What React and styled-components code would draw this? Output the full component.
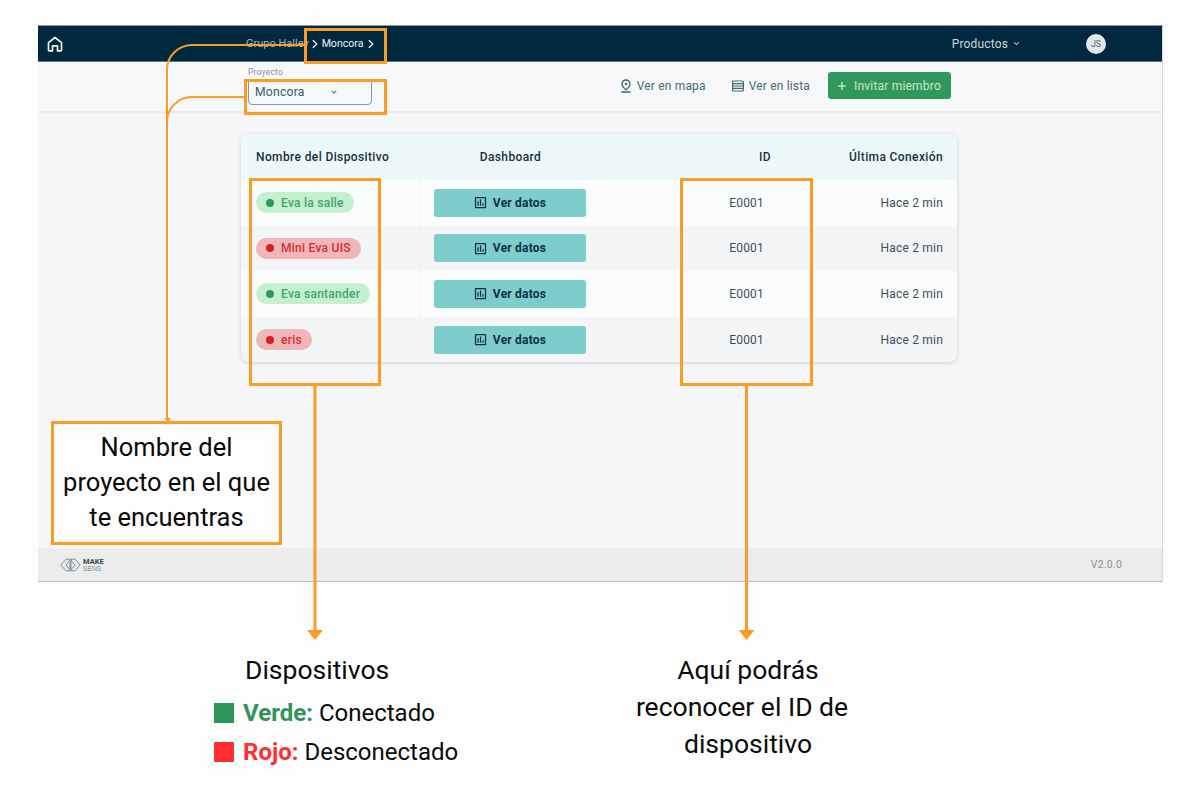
import styled, { createGlobalStyle } from "styled-components";
import { MdOutlineInsertChart, MdOutlinePinDrop, MdKeyboardArrowDown, MdAdd } from "react-icons/md";
import { ChevronRight } from "lucide-react";

const devices = [
	{ name: "Eva la salle", online: true },
	{ name: "Mini Eva UIS", online: false },
	{ name: "Eva santander", online: true },
	{ name: "eris", online: false },
];

export default function App() {
	return (
		<Page>
			<GlobalStyle />
			<AppWindow>
				<Header>
					<HomeIcon />
					<Breadcrumb>
						<Crumb>Grupo Halley</Crumb>
						<ChevronRight />
						<Crumb $current>Moncora</Crumb>
						<ChevronRight />
					</Breadcrumb>
					<Products>
						Productos <MdKeyboardArrowDown />
					</Products>
					<Avatar>JS</Avatar>
				</Header>
				<SubBar>
					<SelectField>
						<SelectLabel>Proyecto</SelectLabel>
						<SelectBox>
							Moncora
							<MdKeyboardArrowDown />
						</SelectBox>
					</SelectField>
					<Actions>
						<LinkAction $space={26} $gap={3}>
							<MdOutlinePinDrop />
							Ver en mapa
						</LinkAction>
						<LinkAction $space={18} $gap={5}>
							<ListIcon />
							Ver en lista
						</LinkAction>
						<InviteButton>
							<MdAdd />
							Invitar miembro
						</InviteButton>
					</Actions>
				</SubBar>
				<Content>
					<Table>
						<HeadRow>
							<HeadCell>Nombre del Dispositivo</HeadCell>
							<HeadCell $align="center">Dashboard</HeadCell>
							<HeadCell $align="right">ID</HeadCell>
							<HeadCell $align="right">Última Conexión</HeadCell>
						</HeadRow>
						{devices.map((device) => (
							<Row key={device.name}>
								<NameCell>
									<Pill $online={device.online}>
										<Dot $online={device.online} />
										{device.name}
									</Pill>
								</NameCell>
								<DashCell>
									<DataButton>
										<MdOutlineInsertChart />
										Ver datos
									</DataButton>
								</DashCell>
								<IdCell>E0001</IdCell>
								<TimeCell>Hace 2 min</TimeCell>
							</Row>
						))}
					</Table>
				</Content>
				<Footer>
					<Logo>
						<LogoMark />
						<LogoText>
							<b>MAKE</b>
							<span>SENS</span>
						</LogoText>
					</Logo>
					<Version>V2.0.0</Version>
				</Footer>
			</AppWindow>

			<Captions>
				<DeviceCaption>
					<CaptionTitle>Dispositivos</CaptionTitle>
					<LegendRow>
						<Swatch $color="#2e9458" />
						<LegendKey $color="#2e9458">Verde:</LegendKey> Conectado
					</LegendRow>
					<LegendRow>
						<Swatch $color="#fb3034" />
						<LegendKey $color="#fb3034">Rojo:</LegendKey> Desconectado
					</LegendRow>
				</DeviceCaption>
				<IdCaption>
					<CaptionLine $indent={12}>Aquí podrás</CaptionLine>
					<CaptionLine>reconocer el ID de</CaptionLine>
					<CaptionLine $indent={12}>dispositivo</CaptionLine>
				</IdCaption>
			</Captions>

			<Connectors />
			<Marker $x={304} $y={28} $w={83} $h={36} />
			<Marker $x={244} $y={79} $w={143} $h={36} />
			<Marker $x={249} $y={178} $w={132} $h={208} />
			<Marker $x={680} $y={178} $w={133} $h={208} />
			<NoteBox>
				Nombre del
				<br />
				proyecto en el que
				<br />
				te encuentras
			</NoteBox>
		</Page>
	);
}

function HomeIcon() {
	return (
		<HomeSvg viewBox="0 0 16 16">
			<path d="M1.500 6.600 8 1.500l6.500 5.100V14a.8.8 0 0 1-.8.8h-3.200v-5h-5v5H2.300a.8.8 0 0 1-.8-.8z" />
		</HomeSvg>
	);
}

function ListIcon() {
	return (
		<svg viewBox="0 0 12 12" width="12" height="12" fill="none" stroke="currentColor" strokeWidth="1.200">
			<rect x="0.6" y="1" width="10.800" height="10" rx="1" />
			<path d="M0.6 3.600h10.800M0.6 6h10.800M0.6 8.400h10.800" />
		</svg>
	);
}

function LogoMark() {
	return (
		<svg viewBox="0 0 21 16" width="21" height="16" fill="none" stroke="#7f8f96" strokeWidth="1">
			<path d="M0.8 8 6 2.200h9L20.200 8 15 13.800H6z" />
			<path d="M6 8l4.500-5.500L15 8l-4.500 5.500z" />
			<path d="M10.500 3.500v9" strokeWidth="1.800" />
		</svg>
	);
}

function Connectors() {
	return (
		<ConnectorSvg viewBox="0 0 1200 800" fill="none" stroke="#f99d25" strokeWidth="2">
			<path d="M305 45H192a25 25 0 0 0-25 25V419" />
			<path d="M245 97H192a25 25 0 0 0-25 26" />
			<path d="M315 385V632" strokeWidth="3" />
			<path d="M746.500 385V632" strokeWidth="3" />
			<path d="M307 630h16l-8 10zM738.500 630h16l-8 10z" fill="#f99d25" stroke="none" />
			<path d="M164 418h7l-3 4z" fill="#f99d25" stroke="none" />
		</ConnectorSvg>
	);
}

const GlobalStyle = createGlobalStyle`
	html, body {
		margin: 0;
		background: #fdfdfd;
	}
	* {
		box-sizing: border-box;
	}
`;

const Page = styled.div`
	position: relative;
	width: 1200px;
	height: 800px;
	overflow: hidden;
	padding-top: 25px;
	background: #fdfdfd;
	font-family: "Roboto", "Liberation Sans", sans-serif;
	color: #0b0b0b;
`;

const AppWindow = styled.div`
	display: flex;
	flex-direction: column;
	width: 1125px;
	height: 557px;
	margin-left: 38px;
	border-top: 1px solid #8d9396;
	border-right: 1px solid #d6d8da;
	border-bottom: 1px solid #b9b9b9;
`;

const Header = styled.div`
	display: flex;
	align-items: center;
	height: 36px;
	flex-shrink: 0;
	padding-left: 9px;
	background: #00293f;
	border-bottom: 1px solid #5d7480;
`;

const HomeSvg = styled.svg`
	width: 16px;
	height: 16px;
	fill: none;
	stroke: #f2f5f6;
	stroke-width: 1.700;
	stroke-linejoin: round;
`;

const Breadcrumb = styled.div`
	display: flex;
	align-items: center;
	margin-left: 183px;
	width: 140px;
	color: #eef2f4;
	white-space: nowrap;
	svg {
		width: 14px;
		height: 14px;
		margin: 0 -1px;
	}
	svg:first-of-type {
		margin-left: -1px;
	}
`;

const Crumb = styled.span`
	font-size: ${(p) => (p.$current ? "10.600px" : "11px")};
	margin: 0 ${(p) => (p.$current ? "1px" : "0")};
	color: ${(p) => (p.$current ? "#eef2f4" : "#a9b6bd")};
`;

const Products = styled.div`
	display: flex;
	align-items: center;
	gap: 3px;
	margin-left: auto;
	font-size: 12px;
	letter-spacing: 0.15px;
	color: #cfd7db;
	svg {
		width: 11px;
		height: 11px;
	}
`;

const Avatar = styled.div`
	display: flex;
	align-items: center;
	justify-content: center;
	width: 20px;
	height: 20px;
	margin: 0 56px 0 64px;
	border-radius: 50%;
	background: #e4e7e9;
	color: #53626b;
	font-size: 8.500px;
`;

const SubBar = styled.div`
	display: flex;
	align-items: center;
	height: 51px;
	flex-shrink: 0;
	padding: 0 211px 0 210px;
	background: #f7f8fa;
	border-bottom: 2px solid #ebecee;
`;

const SelectField = styled.div`
	display: flex;
	flex-direction: column;
	width: 124px;
	margin-top: -1px;
`;

const SelectLabel = styled.span`
	font-size: 8.500px;
	letter-spacing: 0.2px;
	color: #8b959b;
	margin-bottom: 2px;
`;

const SelectBox = styled.div`
	display: flex;
	align-items: center;
	justify-content: space-between;
	height: 26px;
	padding: 0 32px 0 6px;
	border: 1px solid #7e97a0;
	border-radius: 4px;
	font-size: 12.200px;
	letter-spacing: 0.2px;
	color: #33606d;
	svg {
		width: 10px;
		height: 10px;
	}
`;

const Actions = styled.div`
	display: flex;
	align-items: center;
	margin-left: auto;
	margin-top: -2px;
`;

const LinkAction = styled.div`
	display: flex;
	align-items: center;
	gap: ${(p) => p.$gap}px;
	margin-right: ${(p) => p.$space}px;
	font-size: 12px;
	letter-spacing: 0.17px;
	color: #3f6b74;
	svg:first-child {
		flex-shrink: 0;
	}
	> svg[viewBox="0 0 24 24"] {
		width: 16px;
		height: 16px;
	}
`;

const InviteButton = styled.div`
	display: flex;
	align-items: center;
	gap: 5px;
	width: 123px;
	height: 27px;
	padding-left: 7px;
	border-radius: 3px;
	background: #30995a;
	font-size: 12px;
	letter-spacing: 0.2px;
	color: #c9e6d4;
	svg {
		width: 14px;
		height: 14px;
		color: #eef8f2;
	}
`;

const Content = styled.div`
	flex: 1;
	padding: 21px 205px 0 203px;
	background: #f5f6f8;
`;

const Table = styled.div`
	display: grid;
	grid-template-columns: 180px 179px 185px 172px;
	border-radius: 8px;
	overflow: hidden;
	box-shadow: 0 1px 4px rgba(40, 60, 70, 0.2);
`;

const HeadRow = styled.div`
	display: grid;
	grid-column: 1 / -1;
	grid-template-columns: subgrid;
	height: 46px;
	background: #edf9f9;
`;

const HeadCell = styled.div`
	align-self: center;
	padding: 0 14px;
	font-size: 12px;
	font-weight: 500;
	letter-spacing: 0.38px;
	color: #16313f;
	text-align: ${(p) => p.$align || "left"};
	&:first-child {
		padding-left: 15px;
	}
`;

const Row = styled.div`
	display: grid;
	grid-column: 1 / -1;
	grid-template-columns: subgrid;
	height: 45.600px;
	background: #fbfcfc;
	font-size: 12px;
	letter-spacing: 0.2px;
	color: #3b4f5b;
	&:nth-child(odd) {
		background: #f4f5f7;
	}
`;

const NameCell = styled.div`
	display: flex;
	align-items: center;
	padding-left: 15px;
	border-right: 1px solid #f0f1f3;
`;

const Pill = styled.div`
	display: flex;
	align-items: center;
	gap: 7px;
	height: 21px;
	padding: 0 10px;
	border-radius: 11px;
	font-size: 12px;
	font-weight: 500;
	letter-spacing: 0.26px;
	background: ${(p) => (p.$online ? "#c4f0d0" : "#efb7b9")};
	color: ${(p) => (p.$online ? "#3da768" : "#dc2a33")};
`;

const Dot = styled.span`
	width: 8px;
	height: 8px;
	border-radius: 50%;
	background: ${(p) => (p.$online ? "#2b9a58" : "#d81f26")};
`;

const DashCell = styled.div`
	display: flex;
	align-items: center;
	justify-content: center;
	padding-right: 2px;
`;

const DataButton = styled.div`
	display: flex;
	align-items: center;
	justify-content: center;
	gap: 5px;
	width: 152px;
	height: 28px;
	border-radius: 3px;
	background: #7dcdcc;
	font-size: 12px;
	font-weight: 700;
	color: #10303f;
	svg {
		width: 15px;
		height: 15px;
	}
`;

const IdCell = styled.div`
	align-self: center;
	padding-right: 21px;
	text-align: right;
`;

const TimeCell = styled.div`
	align-self: center;
	padding-right: 14px;
	text-align: right;
`;

const Footer = styled.div`
	display: flex;
	align-items: center;
	justify-content: space-between;
	height: 33px;
	flex-shrink: 0;
	padding: 0 40px 0 22px;
	background: #ececec;
`;

const Logo = styled.div`
	display: flex;
	align-items: center;
	gap: 2px;
`;

const LogoText = styled.div`
	display: flex;
	flex-direction: column;
	font-size: 7.500px;
	line-height: 7px;
	color: #66757d;
	b {
		color: #33464f;
	}
	span {
		font-weight: 300;
	}
`;

const Version = styled.span`
	font-size: 10.500px;
	letter-spacing: 0.2px;
	color: #8a9499;
`;

const Captions = styled.div`
	display: flex;
	margin-top: 73px;
	padding-left: 214px;
`;

const DeviceCaption = styled.div`
	width: 398px;
`;

const CaptionTitle = styled.div`
	height: 38px;
	padding-left: 31px;
	font-size: 26.500px;
	line-height: 30px;
`;

const LegendRow = styled.div`
	display: flex;
	align-items: center;
	height: 39px;
	font-size: 24px;
	white-space: pre;
`;

const Swatch = styled.span`
	width: 20px;
	height: 20px;
	margin-right: 9px;
	background: ${(p) => p.$color};
`;

const LegendKey = styled.b`
	color: ${(p) => p.$color};
`;

const IdCaption = styled.div`
	width: 260px;
	font-size: 26.500px;
	line-height: 37px;
	text-align: center;
	margin-top: -4px;
`;

const CaptionLine = styled.div`
	padding-left: ${(p) => p.$indent || 0}px;
`;

const ConnectorSvg = styled.svg`
	position: absolute;
	left: 0;
	top: 0;
	width: 1200px;
	height: 800px;
	pointer-events: none;
`;

const Marker = styled.div`
	position: absolute;
	left: ${(p) => p.$x}px;
	top: ${(p) => p.$y}px;
	width: ${(p) => p.$w}px;
	height: ${(p) => p.$h}px;
	border: 3px solid #f99d25;
`;

const NoteBox = styled.div`
	position: absolute;
	left: 51px;
	top: 421px;
	display: flex;
	align-items: center;
	justify-content: center;
	width: 231px;
	height: 124px;
	padding-bottom: 2px;
	border: 3px solid #f99d25;
	background: #fdfdfd;
	font-size: 25.500px;
	line-height: 35px;
	text-align: center;
`;
